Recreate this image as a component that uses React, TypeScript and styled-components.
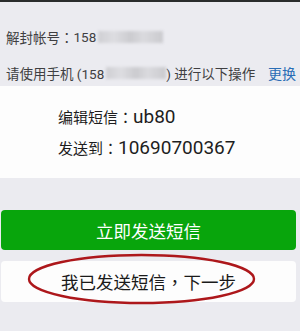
import React from "react";
import styled, { createGlobalStyle } from "styled-components";

const Global = createGlobalStyle`
  html, body { margin: 0; padding: 0; background: #ebebf0; }
  body { font-family: Roboto, "Noto Sans CJK SC", sans-serif; }
`;

const Page = styled.div`
  width: 300px;
  height: 331px;
  overflow: hidden;
  background: #ebebf0;
`;

const TopBar = styled.div`
  height: 2px;
  background: #2a2c2c;
`;

const Info = styled.div`
  display: flex;
  flex-direction: column;
  gap: 16px;
  padding: 25px 4px 3px 6px;
`;

const InfoRow = styled.div`
  display: flex;
  align-items: center;
  height: 20px;
  font-size: 13.5px;
  color: #3f3f42;
  white-space: nowrap;
`;

const Punct = styled.span`
  display: inline-block;
  width: 1em;
  text-align: center;
  font-family: "Noto Sans CJK TC", sans-serif;
`;

const Masked = styled.span<{ $w: number }>`
  display: inline-block;
  width: ${(p) => p.$w}px;
  height: 12px;
  margin-left: 2px;
  background: linear-gradient(90deg, #cfcfd3 0%, #dddde1 25%, #cbcbcf 50%, #dadade 70%, #cacace 100%);
  filter: blur(1.5px);
`;

const Change = styled.span`
  margin-left: auto;
  color: #2a6db5;
  font-size: 14px;
`;

const Panel = styled.div`
  background: #fdfdfd;
  padding: 19px 0 18px 58px;
  display: flex;
  flex-direction: column;
  gap: 7px;
`;

const PanelLine = styled.div`
  display: flex;
  align-items: baseline;
  height: 24px;
  line-height: 24px;
  color: #1e1e1e;
`;

const Label = styled.span`
  font-size: 15px;
`;

const Value = styled.span`
  font-size: 19px;
`;

const Actions = styled.div`
  position: relative;
  display: flex;
  flex-direction: column;
  gap: 11px;
  padding: 32px 4px 0 1px;
`;

const Button = styled.div<{ $primary?: boolean }>`
  height: ${(p) => (p.$primary ? 40 : 41)}px;
  border-radius: 4px;
  display: flex;
  align-items: center;
  justify-content: center;
  font-size: 17.5px;
  background: ${(p) => (p.$primary ? "#08a50c" : "#fdfdfd")};
  color: ${(p) => (p.$primary ? "#ffffff" : "#1a1a1a")};
`;

const Annotation = styled.svg`
  position: absolute;
  left: 0;
  top: 0;
  pointer-events: none;
`;

export default function App() {
  return (
    <Page>
      <Global />
      <TopBar />
      <Info>
        <InfoRow>
          解封帐号<Punct>：</Punct>158
          <Masked $w={65} />
        </InfoRow>
        <InfoRow>
          请使用手机 (158
          <Masked $w={60} />
          ) 进行以下操作
          <Change>更换</Change>
        </InfoRow>
      </Info>
      <Panel>
        <PanelLine>
          <Label>
            编辑短信<Punct>：</Punct>
          </Label>
          <Value>ub80</Value>
        </PanelLine>
        <PanelLine>
          <Label>
            发送到<Punct>：</Punct>
          </Label>
          <Value>10690700367</Value>
        </PanelLine>
      </Panel>
      <Actions>
        <Button $primary>立即发送短信</Button>
        <Button>
          我已发送短信<Punct>，</Punct>下一步
        </Button>
        <Annotation width="300" height="140" viewBox="0 0 300 140">
          <ellipse cx="141.5" cy="101" rx="112.5" ry="24" fill="none" stroke="#ad171b" strokeWidth="2.4" />
        </Annotation>
      </Actions>
    </Page>
  );
}
